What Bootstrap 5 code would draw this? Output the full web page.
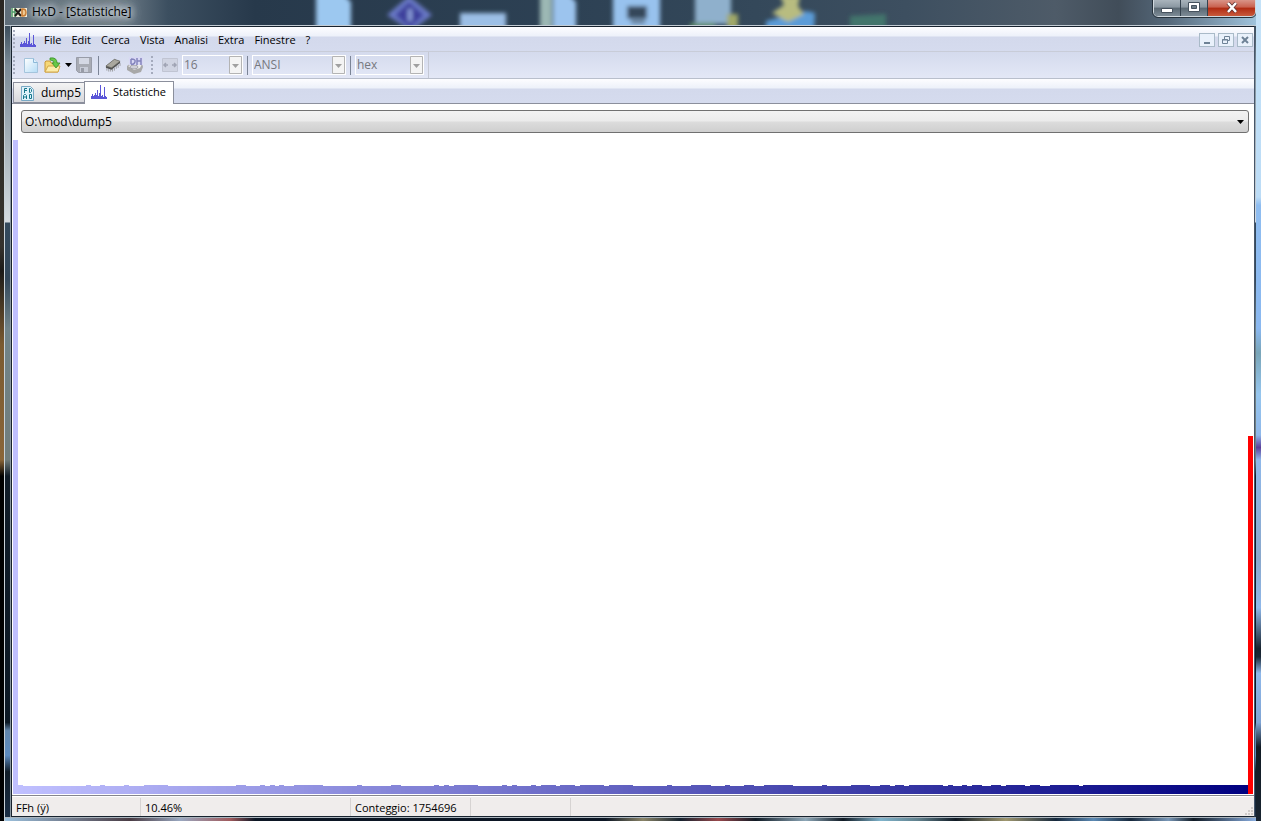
<!DOCTYPE html>
<html lang="it">
<head>
<meta charset="utf-8">
<meta name="viewport" content="width=device-width, initial-scale=1">
<title>HxD - [Statistiche]</title>
<link href="https://cdn.jsdelivr.net/npm/bootstrap@5.3.0/dist/css/bootstrap.min.css" rel="stylesheet">
<style>
  body { font: 11px/16px "Open Sans", "Noto Sans", sans-serif; color: #000; background: #101820; }
  button { font: inherit; }
  svg { display: block; flex: none; }

  /* desktop seen at both sides of the window */
  .desk-l { width: 4px; background: linear-gradient(#2a2622, #35312c 30%, #1c1a18 33%, #7a5a30 42%, #8a6538 56%, #000 58%, #000); }
  .desk-r { width: 5px; background: linear-gradient(#c4e2f8, #bcdcf6 24%, #8fbdf0 25%, #8ab8f0 40%, #79a5b8 43%, #96c6ee 48%, #8fb8ea 53%, #5b3f9a 54.5%, #8fb8ea 56%, #8aa8cc 68%, #8fb8ea 74%, #16222e 79%, #1a2836 80%, #8fb8ea 82%, #7fa4d4 88%, #101a24 91%, #182430); }

  /* glass frame */
  .glass { min-width: 0; border-left: 1px solid #c8d0d6; padding: 0 1px 0 6px;
    background: linear-gradient(#5a6874, #3a4b5a 3%, #7c8c98 8%, #d4dadf 27%, #34495c 27.2%, #33475a 34%, #718489 40%, #717d7c 56%, #101c28 58%, #0c1824 88%, #6286ac 89%, #5b8ac0 92%, #101c28 94%, #1c3048); }
  .titlebar { height: 26px; margin: 0 -1px 0 -6px; padding: 0 0 0 6px; overflow: hidden; border-bottom: 1px solid #c3ccd4;
    background: linear-gradient(90deg, #5f6d79, #6f7d88 9%, #3c4f60 13%, #27394b 20%, #2d4154 45%, #34485a 60%, #3d4f60 72%, #4e5b68 84%, #414d59 89%, #55687a 93%, #9fc3dc); }
  .scene { left: 0; top: 0; }
  .title-text { font-size: 12px; padding: 4px 6px 0 5px; text-shadow: 0 0 6px #e8eef2, 0 0 9px #d8e0e6, 0 0 12px #c8d2da, 0 0 12px #c8d2da; }
  .caption { border: 1px solid #d0d8de; border-top: 0; border-radius: 0 0 5px 5px; height: 17px; overflow: hidden; outline: 1px solid #26323c; }
  .caption button { border: 0; border-right: 1px solid #35424e; padding: 1px 0 0; width: 27px; height: 16px; display: flex; justify-content: center; align-items: flex-start;
    background: linear-gradient(#a9b4bc, #8a97a1 45%, #5a6872 50%, #7d8b96); }
  .caption button.shut { width: 47px; border: 0; background: linear-gradient(#d99488, #c9604e 45%, #b02a12 50%, #c85a3c); }

  .client { border: 1px solid #17222e; border-right-color: #46566a; background: #fff; box-shadow: -1px 0 #8b98a2; }
  .menubar, .tabstrip { background: linear-gradient(#fdfdff, #edf1fa 9px, #d3d9ec 10px, #d5dbee); }
  .menubar { height: 25px; border-bottom: 1px solid #c8ccd8; padding-top: 1px; }
  .menubar svg.doc-icon { margin: 0 2px 0 4px; }
  .menubar a { color: #000; text-decoration: none; padding: 0 5px; }
  .grip { width: 3px; height: 19px; margin-left: 1px; background: radial-gradient(circle at 1px 1px, #a5abbd 1px, transparent 1px) 0 0 / 3px 4px; }
  .mdi { gap: 3px; margin-right: 1px; }
  .child { width: 16px; height: 14px; padding: 0; border: 1px solid #a9bac8; background: #e9f1fb; display: grid; place-items: center; }

  .toolrow { height: 27px; background: linear-gradient(#d4daed, #e3e7f6); border-bottom: 1px solid #b9bfcc; }
  .tools { border-right: 1px solid #c4c8d4; }
  .tool { border: 0; background: none; padding: 0; }
  .tool.spaced, .rule.spaced { margin-left: 6px; }
  .rule { width: 1px; height: 19px; background: #7b8496; }
  .pick { width: 61px; height: 20px; border: 1px solid #fff; border-radius: 0; font-size: 12px; line-height: 16px; padding: 0 14px 0 1px; min-height: 0; }
  .pick:disabled { color: #76787e; opacity: 1; background: transparent url("data:image/svg+xml,%3Csvg xmlns='http://www.w3.org/2000/svg' width='13' height='18'%3E%3Cpath d='M.5.5h12v17H.5z' fill='%23f4f4f4' stroke='%23b4b4b4'/%3E%3Cpath d='M3 8h7l-3.500 4z' fill='%23a0a0a0'/%3E%3C/svg%3E") no-repeat right 0 center / 13px 18px; }
  .pick.wide { width: 94px; }
  .pick.mid { width: 69px; }

  .tabstrip { height: 25px; border-bottom: 1px solid #8b8f9c; padding-left: 1px; }
  .tabstrip button { border: 1px solid #8b8f9c; border-radius: 0; color: #000; display: flex; align-items: center; }
  .tabstrip .tab-back { height: 21px; font-size: 12px; gap: 7px; padding: 1px 3px 0 7px; border-right: 0; background: linear-gradient(#f4f4f4, #d8d8dc); }
  .tabstrip .tab-front { height: 23px; gap: 5px; background: #fff; border-bottom: 0; padding: 0 7px 2px 6px; margin-bottom: -1px; }

  .source-row { padding: 6px 5px 0 9px; }
  .source { height: 23px; min-height: 0; border: 1px solid #707070; border-radius: 3px; color: #000; font-size: 12px; line-height: 16px; padding: 1px 20px 0 3px;
    background: url("data:image/svg+xml,%3Csvg xmlns='http://www.w3.org/2000/svg' width='7' height='4'%3E%3Cpath d='M0 0h7L3.500 4z'/%3E%3C/svg%3E") no-repeat right 4px center / 7px 4px, linear-gradient(#f2f2f2, #ebebeb 48%, #dcdcdc 52%, #cfcfcf); }
  .chart { margin: 7px 1px 1px; }
  .chart div { flex: 1 1 0; }

  .status { height: 21px; border-top: 1px solid #85858c; box-shadow: inset 0 1px #fff; background: #f0edec; padding: 2px 0 0; }
  .status span { border-right: 1px solid #d6d3d2; padding-left: 4px; height: 18px; line-height: 19px; }
  .s1 { width: 129px; } .s2 { width: 210px; } .s3 { width: 120px; } .s4 { width: 100px; }
  .frame-foot { height: 4px; border-top: 1px solid #aab4bc; margin: 0 -1px 0 -6px;
    background: linear-gradient(90deg, #9cc0dc, #4a3c44 10%, #9aa8c0 14%, #a05a5c 18%, #0c1624 20%, #0c1624 48%, #8a8468 51%, #16222e 54%, #98484c 57%, #101a24 60%, #8ea8b8 64%, #101a24 67%, #80b4cc 70%, #60808c 73%, #101a24 76%, #a09870 80%, #16283c 84%, #5c8ab4 87%, #16283c 90%, #7a98b8 93%, #101a24 95%, #8aaee0); }
</style>
</head>
<body class="vh-100 d-flex overflow-hidden">
<div class="desk-l flex-shrink-0"></div>
<main class="glass flex-grow-1 d-flex flex-column overflow-hidden">
  <header class="titlebar d-flex position-relative flex-shrink-0">
    <svg class="scene position-absolute" width="1100" height="25" viewBox="5 0 1100 25" aria-hidden="true">
      <defs><filter id="soft" x="-20%" y="-50%" width="140%" height="200%"><feGaussianBlur stdDeviation="2"/></filter></defs>
      <g filter="url(#soft)">
        <path d="M316-6h27l8 8v28h-35z" fill="#9cc8f0"/>
        <path d="M387 15l22-19 23 19-21 16z" fill="#6a7ac8"/><path d="M395 15l14-13 15 13-14 13z" fill="#3c409c"/><path d="M408 9h4v12h-4z" fill="#8fa2dc"/>
        <path d="M460 13h46v18h-46z" fill="#9cbfe6"/>
        <path d="M540-6h12v36h-12z" fill="#9cb8b4"/><path d="M553-6h15l8 8v28h-23z" fill="#9cc4ee"/>
        <path d="M613-6h47v36h-47z" fill="#98c2ee"/><path d="M627 6h20v13h-20z" fill="#34465a"/><path d="M631 20h14v4h-14z" fill="#62788e"/>
        <path d="M695-6h36v30h-36z" fill="#8fb0cc"/><path d="M690 23h25v6h-25z" fill="#5d8c66"/><path d="M727 14h11v14h-11z" fill="#a0a868"/>
        <path d="M766 21l40-10 9 2-1 16h-48z" fill="#5c9cd8"/><path d="M780-4h20l-2 10 6 8-16 8-16-9 12-8z" fill="#b8bc80"/>
        <path d="M850 16l36-2v14h-36z" fill="#42746c"/>
      </g>
    </svg>
    <svg class="position-relative mt-2" width="16" height="9" viewBox="0 0 16 9" aria-hidden="true">
      <path d="M0 0h16v9H0z" fill="#f4eedc"/><path d="M1 0v9M4 0v9M1 4h3" stroke="#4c9c68" stroke-width="1.500" fill="none"/><path d="M4 1l6 7M10 1L4 8" stroke="#201c18" stroke-width="2"/><path d="M11 1h1q3 0 3 3.500T12 8h-1z" fill="#f0c890" stroke="#c8782c" stroke-width="1.500"/>
    </svg>
    <div class="title-text position-relative">HxD - [Statistiche]</div>
    <div class="caption d-flex ms-auto position-relative">
      <button type="button" aria-label="Riduci a icona"><svg width="14" height="14"><path d="M1.500 7.500h11v4h-11z" fill="#fff" stroke="#46525e"/></svg></button>
      <button type="button" aria-label="Ripristina"><svg width="14" height="14"><path d="M1.500 1.500h11v9h-11z" fill="#fff" stroke="#46525e"/><path d="M4.500 4.500h5v3h-5z" fill="#6f7d88" stroke="#46525e"/></svg></button>
      <button type="button" class="shut" aria-label="Chiudi"><svg width="14" height="14"><path d="M3 2l8 9M11 2l-8 9" stroke="#5c3030" stroke-width="4"/><path d="M3 2l8 9M11 2l-8 9" stroke="#fff" stroke-width="2.500"/></svg></button>
    </div>
  </header>

  <div class="client flex-grow-1 d-flex flex-column">
    <nav class="menubar d-flex align-items-center flex-shrink-0" aria-label="Menu">
      <span class="grip"></span>
      <svg class="doc-icon" width="17" height="14" viewBox="0 0 17 14" aria-hidden="true"><path id="spikes" d="M0 14V11H1V9H2V11H3V10H4V8H5V10H6V5H7V11H8V8H9V0H10V11H11V10H12V12H13V2H14V11H15V12H16V14Z" fill="#5a55d8"/></svg>
      <a href="#">File</a><a href="#">Edit</a><a href="#">Cerca</a><a href="#">Vista</a><a href="#">Analisi</a><a href="#">Extra</a><a href="#">Finestre</a><a href="#">?</a>
      <div class="mdi d-flex ms-auto">
        <button type="button" class="child" aria-label="Riduci finestra"><svg width="10" height="10"><path d="M2 7h6v2H2z" fill="#6e8296"/></svg></button>
        <button type="button" class="child" aria-label="Ripristina finestra"><svg width="10" height="10"><path d="M3.500 4V1.500h5v4H7M1.500 4.500h5v4h-5zM1 5h6" fill="none" stroke="#6e8296"/></svg></button>
        <button type="button" class="child" aria-label="Chiudi finestra"><svg width="10" height="10"><path d="M2 2l6 6M8 2L2 8" stroke="#6e8296" stroke-width="2"/></svg></button>
      </div>
    </nav>

    <div class="toolrow d-flex flex-shrink-0">
      <div class="tools d-flex align-items-center" role="toolbar" aria-label="Strumenti">
        <span class="grip"></span>
        <button type="button" class="tool ms-2" aria-label="Nuovo"><svg width="14" height="17" viewBox="0 0 14 17"><defs><linearGradient id="pg" x2="1" y2="1"><stop stop-color="#fff"/><stop offset="1" stop-color="#b4dcf6"/></linearGradient></defs><path d="M.5 1.500h9l4 4v10H.5z" fill="url(#pg)" stroke="#a4c4dc"/><path d="M9.500 1.500v4h4" fill="#def0fc" stroke="#8cb8d8"/></svg></button>
        <button type="button" class="tool spaced d-flex align-items-center" aria-label="Apri"><svg width="17" height="16" viewBox="0 0 17 16"><path d="M1 15V5l1-1h4l1 2h7v9z" fill="#f6d878" stroke="#c89838"/><path d="M1 15l3-6h12l-2 6z" fill="#fcecaa" stroke="#d4a848"/><path d="M6 1q7-1 7 5h3l-4 5-4-5h2q0-3-4-3z" fill="#68c848" stroke="#38902c" stroke-width=".8"/></svg><svg class="ms-1" width="7" height="4"><path d="M0 0h7L3.500 4z"/></svg></button>
        <button type="button" class="tool ms-1" disabled aria-label="Salva"><svg width="16" height="16" viewBox="0 0 16 16"><path d="M.5.500h15v15H2.500l-2-2z" fill="#a8abb4" stroke="#989ca8"/><path d="M3 1h10v6H3z" fill="#d4d8e4"/><path d="M4 10h8v5H4z" fill="#c8ccd8"/><path d="M5 11h3v4H5z" fill="#989ca8"/></svg></button>
        <span class="rule spaced"></span>
        <button type="button" class="tool spaced" aria-label="Apri RAM"><svg width="16" height="14" viewBox="0 0 17 14"><path d="M2 9v4M4 10v4M6 11v3M8 11v3M10 10v3M12 8v3M14 7v3M16 5v3" stroke="#8c8c8c" stroke-width=".8"/><path d="M1 8l9-7 6 2v2l-9 7-6-2z" fill="#505050"/><path d="M1 8l9-7 6 2-9 7z" fill="#aaa89f" stroke="#6c6c66" stroke-width=".7"/></svg></button>
        <button type="button" class="tool spaced" aria-label="Apri disco"><svg width="16" height="17" viewBox="0 0 16 17"><path d="M0 9l4-3h11l1 4-2 5-7 2-7-4z" fill="#a8a8a8"/><path d="M1 9l5-2h9l-2 4-6 2z" fill="#ececec"/><ellipse cx="7" cy="10" rx="4" ry="2" fill="#d0d0d8" stroke="#909098" stroke-width=".7"/><path d="M2 0h14v8H2z" fill="#d8d8f4"/><path d="M4 2v5M4 2q5 0 4 3t-4 2M10 1v7M14 1v7M10 4h4" stroke="#8484bc" stroke-width="1.500" fill="none"/></svg></button>
        <span class="grip ms-2"></span>
        <svg class="ms-2 me-1" width="16" height="14" viewBox="0 0 16 14" aria-hidden="true"><path d="M.5.500h15v13H.5z" fill="#d0d4e2" stroke="#c0c4d2"/><path d="M2 7h4M10 7h4M4 5L2 7l2 2M12 5l2 2-2 2" fill="none" stroke="#a0a4b4" stroke-width="1.500"/></svg>
        <select class="form-select pick" disabled aria-label="Byte per riga"><option>16</option></select>
        <span class="rule mx-1"></span>
        <select class="form-select pick wide" disabled aria-label="Set di caratteri"><option>ANSI</option></select>
        <span class="rule mx-1"></span>
        <select class="form-select pick mid me-1" disabled aria-label="Base offset"><option>hex</option></select>
      </div>
    </div>

    <div class="tabstrip d-flex align-items-end flex-shrink-0" role="tablist">
      <button type="button" class="tab-back" role="tab" aria-selected="false"><svg width="13" height="15" viewBox="0 0 13 15" aria-hidden="true"><path d="M.5.500h9l3 3v11H.5z" fill="#dff2fa" stroke="#78a8c4"/><path d="M3.500 7V2.500H6M3 4.500h3M8.500 2.500h1l1 1v2l-1 1h-1zM2.500 13V9.500l1-1h1l1 1V13M3 11h2M8.500 8.500h2v4h-2z" fill="none" stroke="#18788c"/></svg>dump5</button>
      <button type="button" class="tab-front" role="tab" aria-selected="true"><svg width="17" height="14" viewBox="0 0 17 14" aria-hidden="true"><use href="#spikes"/></svg>Statistiche</button>
    </div>

    <div class="source-row">
      <select class="form-select source" aria-label="File"><option>O:\mod\dump5</option></select>
    </div>
    <div class="chart flex-grow-1 d-flex align-items-end" id="chart" role="img" aria-label="Distribuzione dei byte"></div>
    <footer class="status d-flex flex-shrink-0">
      <span class="s1">FFh (ÿ)</span><span class="s2">10.46%</span><span class="s3">Conteggio: 1754696</span><span class="s4"></span>
      <svg class="ms-auto mt-auto" width="10" height="10" aria-hidden="true"><path d="M7 1h2v2H7zM7 4h2v2H7zM4 4h2v2H4zM7 7h2v2H7zM4 7h2v2H4zM1 7h2v2H1z" fill="#cfcbc9"/></svg>
    </footer>
  </div>
  <div class="frame-foot flex-shrink-0"></div>
</main>
<div class="desk-r flex-shrink-0"></div>

<script src="https://cdn.jsdelivr.net/npm/bootstrap@5.3.0/dist/js/bootstrap.bundle.min.js"></script>
<script>
  // Share of each byte value, relative to the most frequent one (00h)
  const LOW = 1.23, HIGH = 1.38;
  const share = new Array(256).fill(LOW);
  const peaks = [[1,1],[15,15],[18,18],[23,23],[27,31],[46,47],[51,51],[53,53],[55,55],[58,63],[71,71],[78,79],[87,87],[89,89],[91,95],
    [101,101],[103,103],[107,107],[109,111],[113,115],[117,121],[123,127],[135,135],[140,143],[147,147],[151,152],[155,160],[167,167],
    [173,176],[179,180],[182,183],[185,191],[193,193],[196,196],[198,199],[202,203],[205,208],[210,211],[214,219],[221,254]];
  for (const [from, to] of peaks) share.fill(HIGH, from, to + 1);
  share[0] = 100;
  share[255] = 54.75;
  const mix = (a, b, t) => Math.round(a + (b - a) * t);
  const chart = document.getElementById('chart');
  share.forEach((value, i) => {
    const t = i / 255;
    const bar = document.createElement('div');
    bar.style.height = value + '%';
    bar.style.background = i === 255 ? '#f00' : `rgb(${mix(192, 0, t)},${mix(192, 0, t)},${mix(255, 128, t)})`;
    chart.append(bar);
  });
</script>
</body>
</html>
